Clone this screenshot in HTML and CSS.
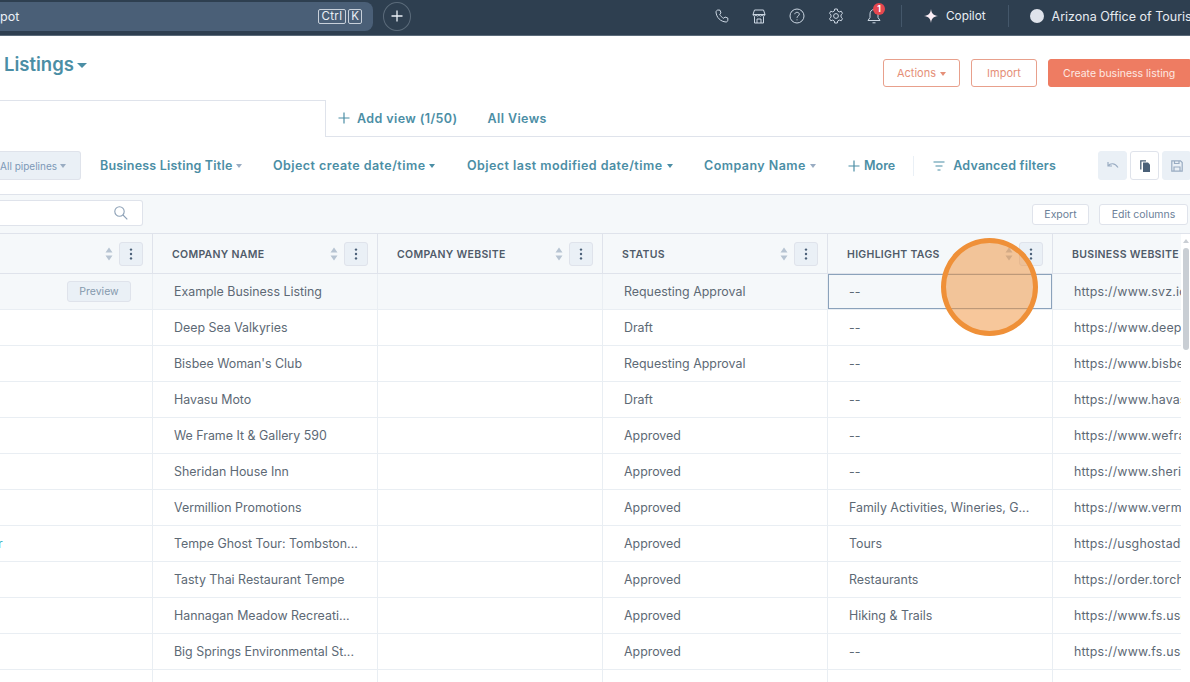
FILE: index.html
```html
<!DOCTYPE html>
<html lang="en">
<head>
<meta charset="utf-8">
<title>Listings</title>
<link rel="stylesheet" href="styles.css">
</head>
<body>
<svg class="defs" width="0" height="0" aria-hidden="true">
  <symbol id="sort" viewBox="0 0 8 14"><path d="M4 0.5 7.5 5.5H0.5Z M4 13.5 0.5 8.5H7.5Z"/></symbol>
  <symbol id="dots" viewBox="0 0 4 12"><circle cx="2" cy="1.6" r="1.2"/><circle cx="2" cy="6" r="1.2"/><circle cx="2" cy="10.4" r="1.2"/></symbol>
</svg>

<header class="topbar">
  <div class="search">
    <span class="search-text">pot</span>
    <span class="keys"><kbd class="key-ctrl">Ctrl</kbd><kbd>K</kbd></span>
  </div>
  <button class="add-circle" aria-label="Add"><svg width="12" height="12" viewBox="0 0 12 12"><path d="M6 0.5V11.5M0.5 6H11.5"/></svg></button>
  <div class="top-right">
    <svg class="ti" width="14" height="14" viewBox="0 0 14 14"><path d="M3 1 5 1.2 6 4 4.7 5.2C5.4 7 7 8.6 8.8 9.3L10 8l2.8 1v2.2C12.8 12.2 12 13 11 13 5.5 12.6 1.4 8.5 1 3 1 2 2 1 3 1Z"/></svg>
    <svg class="ti" width="14" height="15" viewBox="0 0 14 15"><path d="M2.5 1H11.5L13 5.5C13 7.500 10.500 7.500 10 5.800 9.500 7.500 7.500 7.500 7 5.800 6.500 7.500 4.500 7.500 4 5.800 3.500 7.500 1 7.500 1 5.500ZM1 5.500H13M2.500 7.500V14H11.500V7.500M5 14V10H9V14"/></svg>
    <svg class="ti" width="16" height="16" viewBox="0 0 16 16"><circle cx="8" cy="8" r="7"/><path d="M5.800 6.200C5.800 3.700 10.300 3.700 10.300 6.200 10.300 8 8 7.900 8 9.800"/><path d="M8 11.400V12.300"/></svg>
    <svg class="ti" width="16" height="16" viewBox="0 0 16 16"><path d="M6.700 1H9.300L9.700 3 11.300 3.900 13.200 3.200 14.500 5.400 13 6.800V9.200L14.500 10.600 13.200 12.800 11.300 12.100 9.700 13 9.300 15H6.700L6.300 13 4.700 12.100 2.800 12.800 1.500 10.600 3 9.200V6.800L1.500 5.400 2.800 3.200 4.700 3.900 6.300 3Z"/><circle cx="8" cy="8" r="2.400"/></svg>
    <span class="bell">
      <svg class="ti" width="14" height="16" viewBox="0 0 14 16"><path d="M7 1.500C4.500 1.500 3 3.500 3 6V9.500L1 12.500H13L11 9.500V6C11 3.500 9.500 1.500 7 1.500ZM5.500 14.800H8.500"/></svg>
      <span class="badge">1</span>
    </span>
    <span class="vsep"></span>
    <span class="copilot">
      <svg width="14" height="14" viewBox="0 0 14 14"><path class="spark" d="M7 0C7.500 4.500 9.500 6.500 14 7 9.500 7.500 7.500 9.500 7 14 6.500 9.500 4.500 7.500 0 7 4.500 6.500 6.500 4.500 7 0Z"/></svg>
      Copilot
    </span>
    <span class="vsep vsep-b"></span>
    <span class="avatar"></span>
    <span class="account">Arizona Office of Tourism</span>
  </div>
</header>

<section class="title-row">
  <h1 class="title">Listings<i class="caret caret-title"></i></h1>
  <div class="actions">
    <button class="btn btn-outline btn-actions">Actions<i class="caret caret-orange"></i></button>
    <button class="btn btn-outline btn-import">Import</button>
    <button class="btn btn-primary">Create business listing</button>
  </div>
</section>

<nav class="tabs">
  <div class="tab-active"></div>
  <div class="tab-links">
    <a class="tab-link tab-add"><svg width="12" height="12" viewBox="0 0 12 12"><path d="M6 0.500V11.500M0.500 6H11.500"/></svg>Add view (1/50)</a>
    <a class="tab-link">All Views</a>
  </div>
</nav>

<section class="filters">
  <button class="pipelines"><span>All pipelines</span><i class="caret caret-grey"></i></button>
  <a class="filter f-title">Business Listing Title<i class="caret caret-grey"></i></a>
  <a class="filter f-create">Object create date/time<i class="caret caret-teal"></i></a>
  <a class="filter f-mod">Object last modified date/time<i class="caret caret-teal"></i></a>
  <a class="filter f-company">Company Name<i class="caret caret-grey"></i></a>
  <a class="filter f-more"><svg width="12" height="12" viewBox="0 0 12 12"><path d="M6 0.500V11.500M0.500 6H11.500"/></svg>More</a>
  <span class="fsep"></span>
  <a class="filter f-adv"><svg width="12" height="10" viewBox="0 0 12 10"><path d="M0.500 1H11.500M2.500 5H9.500M4.500 9H7.500"/></svg>Advanced filters</a>
  <div class="view-tools">
    <button class="tool tool-off"><svg width="12" height="10" viewBox="0 0 12 10"><path d="M1 1V5H5M1 5C3.500 2 7.500 1.500 11 6.500"/></svg></button>
    <button class="tool tool-on"><svg width="10" height="12" viewBox="0 0 10 12"><path class="solid" d="M3 2.500H8L10 4.500V12H3Z"/><path d="M0.800 9.500V0.800H6"/></svg></button>
    <button class="tool tool-off"><svg width="12" height="12" viewBox="0 0 12 12"><path d="M0.800 0.800H9.500L11.200 2.500V11.200H0.800ZM3 11V7H9V11M3.500 1V3.500H8V1"/></svg></button>
  </div>
</section>

<section class="toolbar">
  <div class="search-box"><svg width="14" height="14" viewBox="0 0 14 14"><circle cx="5.500" cy="5.500" r="4.700"/><path d="M9 9 13.300 13.300"/></svg></div>
  <div class="toolbar-right">
    <button class="mini">Export</button>
    <button class="mini mini-edit">Edit columns</button>
  </div>
</section>

<main class="table-wrap">
  <table class="grid">
    <colgroup>
      <col class="c0"><col class="c"><col class="c"><col class="c"><col class="c"><col class="c5">
    </colgroup>
    <thead>
      <tr>
        <th><div class="th"><span class="th-label"></span><svg class="sort"><use href="#sort"/></svg><span class="menu"><svg width="4" height="12"><use href="#dots"/></svg></span></div></th>
        <th><div class="th"><span class="th-label">COMPANY NAME</span><svg class="sort"><use href="#sort"/></svg><span class="menu"><svg width="4" height="12"><use href="#dots"/></svg></span></div></th>
        <th><div class="th"><span class="th-label">COMPANY WEBSITE</span><svg class="sort"><use href="#sort"/></svg><span class="menu"><svg width="4" height="12"><use href="#dots"/></svg></span></div></th>
        <th><div class="th"><span class="th-label">STATUS</span><svg class="sort"><use href="#sort"/></svg><span class="menu"><svg width="4" height="12"><use href="#dots"/></svg></span></div></th>
        <th><div class="th"><span class="th-label">HIGHLIGHT TAGS</span><svg class="sort"><use href="#sort"/></svg><span class="menu"><svg width="4" height="12"><use href="#dots"/></svg></span></div></th>
        <th><div class="th th-last"><span class="th-label">BUSINESS WEBSITE</span></div></th>
      </tr>
    </thead>
    <tbody>
      <tr class="hover"><td class="first"><span class="preview">Preview</span></td><td>Example Business Listing</td><td></td><td>Requesting Approval</td><td class="focus">--</td><td class="url">https://www.svz.identity</td></tr>
      <tr><td></td><td>Deep Sea Valkyries</td><td></td><td>Draft</td><td>--</td><td class="url">https://www.deepseavalkyries.com</td></tr>
      <tr><td></td><td>Bisbee Woman's Club</td><td></td><td>Requesting Approval</td><td>--</td><td class="url">https://www.bisbeewomansclub.org</td></tr>
      <tr><td></td><td>Havasu Moto</td><td></td><td>Draft</td><td>--</td><td class="url">https://www.havasumoto.com</td></tr>
      <tr><td></td><td>We Frame It &amp; Gallery 590</td><td></td><td>Approved</td><td>--</td><td class="url">https://www.weframeit.com</td></tr>
      <tr><td></td><td>Sheridan House Inn</td><td></td><td>Approved</td><td>--</td><td class="url">https://www.sheridanhouse.com</td></tr>
      <tr><td></td><td>Vermillion Promotions</td><td></td><td>Approved</td><td>Family Activities, Wineries, G...</td><td class="url">https://www.vermillion.com</td></tr>
      <tr><td class="link"><span class="cut">r</span></td><td>Tempe Ghost Tour: Tombston...</td><td></td><td>Approved</td><td>Tours</td><td class="url">https://usghostadventures.com</td></tr>
      <tr><td></td><td>Tasty Thai Restaurant Tempe</td><td></td><td>Approved</td><td>Restaurants</td><td class="url">https://order.torchystacos.com</td></tr>
      <tr><td></td><td>Hannagan Meadow Recreati...</td><td></td><td>Approved</td><td>Hiking &amp; Trails</td><td class="url">https://www.fs.usda.gov</td></tr>
      <tr><td></td><td>Big Springs Environmental St...</td><td></td><td>Approved</td><td>--</td><td class="url">https://www.fs.usda.gov</td></tr>
      <tr><td></td><td></td><td></td><td></td><td></td><td></td></tr>
    </tbody>
  </table>
  <div class="scrollbar"><i class="thumb"></i></div>
</main>

<div class="click-ring"></div>
</body>
</html>
```
FILE: styles.css
```css
* { box-sizing: border-box; }
html, body { margin: 0; height: 682px; overflow: hidden; }
body { font-family: "Inter", "Noto Sans", sans-serif; background: #fff; color: #33475b; position: relative; width: 1190px; }
button { font-family: inherit; cursor: pointer; }
.defs { position: absolute; }

/* top bar */
.topbar { height: 36px; background: #2e3f50; display: flex; align-items: center; border-bottom: 1px solid #5b6b7a; color: #dfe3eb; }
.search { width: 373px; height: 29px; margin-top: -3px; background: #4a5f77; border-radius: 0 8px 8px 0; display: flex; align-items: center; justify-content: space-between; padding-right: 11px; font-size: 12.5px; color: #eaf0f6; }
.keys { display: flex; gap: 2px; }
kbd { font: inherit; font-size: 11.5px; line-height: 13px; border: 1px solid #c8d0da; border-radius: 2px; padding: 0 2px; height: 15px; color: #eaf0f6; }
.key-ctrl { padding: 0 3px; letter-spacing: .3px; }
.add-circle { width: 28px; height: 29px; margin-left: 10px; margin-top: -3px; border-radius: 50%; border: 1px solid #5b6b7a; background: none; display: flex; align-items: center; justify-content: center; padding: 0; }
.add-circle path { stroke: #eaf0f6; stroke-width: 1.3; fill: none; }
.top-right { margin-left: auto; margin-top: -3px; display: flex; align-items: center; height: 100%; white-space: nowrap; overflow: hidden; width: 476px; padding-left: 1px; }
.ti { fill: none; stroke: #cbd6e2; stroke-width: 1; margin-right: 23px; flex: none; }
.bell { position: relative; display: flex; margin-right: 20px; }
.bell .ti { margin: 0; }
.badge { position: absolute; left: 6px; top: -5px; width: 12px; height: 12px; border-radius: 50%; background: #e5474f; color: #fff; font-size: 8.5px; line-height: 12px; text-align: center; font-weight: 700; }
.vsep { width: 1px; height: 22px; background: #44576a; margin-right: 22px; flex: none; }
.vsep-b { margin-left: 22px; margin-right: 21px; }
.copilot { display: flex; align-items: center; gap: 8px; font-size: 11.8px; color: #eaf0f6; }
.spark { fill: #fbeef5; }
.avatar { width: 14px; height: 14px; border-radius: 50%; background: #dfe3eb; flex: none; margin-right: 8px; }
.account { font-size: 12.5px; color: #e6ebf1; }

/* title row */
.title-row { height: 64px; display: flex; justify-content: space-between; padding-left: 4px; }
.title { margin: 15px 0 0; font-size: 18.5px; line-height: 26px; font-weight: 600; color: #4b8ea5; }
.actions { display: flex; gap: 11px; margin-top: 23px; height: 28px; }
.btn { height: 28px; font-size: 11px; border-radius: 3px; padding: 0; }
.btn-outline { background: #fff; border: 1px solid #e8a08c; color: #e58f78; }
.btn-actions { width: 77px; }
.btn-import { width: 66px; }
.btn-primary { width: 142px; font-size: 10.5px; background: #ee7c62; border: 1px solid #ee7c62; color: #fde9e3; text-align: left; padding-left: 14px; border-radius: 3px 0 0 3px; }
.caret { display: inline-block; width: 0; height: 0; border: 3.5px solid transparent; border-top: 4px solid currentColor; border-bottom: 0; vertical-align: middle; margin-left: 4px; }
.caret-title { color: #4b8ea5; border-width: 5px 5px 0; margin-left: 3px; }
.caret-orange { color: #e58f78; }
.caret-grey { color: #99acc2; }
.caret-teal { color: #4b8ea5; }

/* tabs */
.tabs { height: 37px; display: flex; }
.tab-active { width: 326px; height: 37px; border: 1px solid #dfe3eb; border-left: 0; border-bottom: 0; background: #fff; }
.tab-links { flex: 1; border-bottom: 1px solid #dfe3eb; display: flex; align-items: center; padding: 0 0 0 12px; gap: 30px; }
.tab-link { color: #4b8ea5; font-size: 12.5px; font-weight: 600; display: flex; align-items: center; letter-spacing: .4px; }
.tab-link svg { margin-right: 7px; }
.tab-link path, .f-more path, .f-adv path { stroke: #4b8ea5; stroke-width: 1.2; fill: none; }

/* filters */
.filters { height: 58px; border-bottom: 1px solid #dfe3eb; display: flex; align-items: center; white-space: nowrap; }
.pipelines { width: 81px; height: 29px; background: #eaf0f6; border: 1px solid #dfe3eb; border-left: 0; border-radius: 0 3px 3px 0; font-size: 10px; color: #7c98b6; padding: 0 14px 0 0; margin-right: 19px; display: flex; align-items: center; justify-content: flex-end; white-space: nowrap; flex: none; }
.pipelines .caret { margin-left: 3px; flex: none; }
.pipelines span { flex: none; }
.filter { color: #4b8ea5; font-size: 12.5px; font-weight: 600; display: flex; align-items: center; letter-spacing: .45px; }
.f-title { width: 173px; letter-spacing: .2px; }
.f-create { width: 194px; }
.f-mod { width: 237px; }
.f-company { width: 144px; }
.f-more { letter-spacing: 0; }
.f-more svg { margin-right: 4px; }
.f-adv { letter-spacing: .2px; }
.f-adv svg { margin-right: 8px; }
.fsep { width: 1px; height: 20px; background: #eaf0f6; margin: 0 19px 0 18px; }
.view-tools { margin-left: auto; display: flex; gap: 3px; width: 92px; flex: none; }
.tool { width: 29px; height: 29px; border-radius: 3px; padding: 0; display: flex; align-items: center; justify-content: center; flex: none; }
.tool-off { background: #eaf0f6; border: 1px solid #eaf0f6; }
.tool-off path { fill: none; stroke: #99acc2; stroke-width: 1.2; }
.tool-on { background: #fff; border: 1px solid #dfe3eb; }
.tool-on path { fill: none; stroke: #4a6078; stroke-width: 1.3; }
.tool-on .solid { fill: #4a6078; stroke: none; }

/* toolbar */
.toolbar { height: 39px; background: #f5f8fa; border-bottom: 1px solid #dfe3eb; display: flex; align-items: center; justify-content: space-between; }
.search-box { width: 143px; height: 26px; margin-top: -2px; background: #fff; border: 1px solid #dfe3eb; border-left: 0; border-radius: 0 3px 3px 0; display: flex; align-items: center; justify-content: flex-end; padding-right: 14px; }
.search-box svg { fill: none; stroke: #8ca0b6; stroke-width: 1.1; }
.toolbar-right { display: flex; gap: 10px; padding-right: 2px; }
.mini { height: 21px; width: 57px; background: #fff; border: 1px solid #dfe3eb; border-radius: 3px; font-size: 10.5px; color: #6b8098; padding: 0; }
.mini-edit { width: 89px; }

/* table */
.table-wrap { display: flex; align-items: flex-start; height: 448px; overflow: hidden; }
.grid { table-layout: fixed; border-collapse: separate; border-spacing: 0; width: 1181px; flex: none; }
.c0 { width: 153px; }
.c { width: 225px; }
.c5 { width: 128px; }
th { height: 40px; padding: 0; background: #f5f8fa; border-bottom: 1px solid #dfe3eb; border-right: 1px solid #dfe3eb; text-align: left; font-weight: 600; }
th:last-child, td:last-child { border-right: 0; }
.th { display: flex; align-items: center; height: 39px; padding: 1px 9px 0 19px; }
.th-last { padding-right: 0; }
th:first-child .th { padding-left: 0; }
.th-label { flex: 1; font-size: 10.5px; color: #4f5b69; letter-spacing: .3px; white-space: nowrap; overflow: hidden; }
.sort { width: 8px; height: 14px; fill: #b7c4d2; margin-right: 6px; flex: none; }
.menu { width: 24px; height: 24px; background: #eaf0f6; border: 1px solid #dfe3eb; border-radius: 3px; display: flex; align-items: center; justify-content: center; fill: #4a6078; flex: none; }
td { height: 36px; padding: 0 0 0 21px; border-bottom: 1px solid #e9eef3; border-right: 1px solid #e9eef3; font-size: 12.4px; color: #5d6975; white-space: nowrap; overflow: hidden; }
td.url { letter-spacing: .2px; }
.hover td { background: #f5f8fa; }
td.first { padding: 0 21px 0 0; text-align: right; }
.preview { display: inline-block; width: 64px; height: 21px; line-height: 19px; text-align: center; background: #eaf0f6; border: 1px solid #dfe3eb; border-radius: 3px; font-size: 10.5px; color: #8599ad; }
td.focus { box-shadow: inset 0 0 0 1px #8ba2bb; }
td.link { padding: 0; color: #3fb3c6; }
.cut { display: inline-block; margin-left: -2px; }
.scrollbar { width: 9px; height: 100%; flex: none; position: relative; background: #fff; }
.scrollbar::before { content: ""; position: absolute; top: 5px; left: 2px; border: 3px solid transparent; border-bottom: 4px solid #c9ced4; border-top: 0; }
.thumb { position: absolute; top: 14px; left: 2px; width: 6px; height: 102px; background: #c9ced4; border-radius: 3px; }

/* click marker */
.click-ring { position: absolute; left: 941px; top: 238px; width: 97px; height: 98px; border-radius: 50%; border: 5px solid #ef9038; background: rgba(239, 144, 56, .5); }
```
